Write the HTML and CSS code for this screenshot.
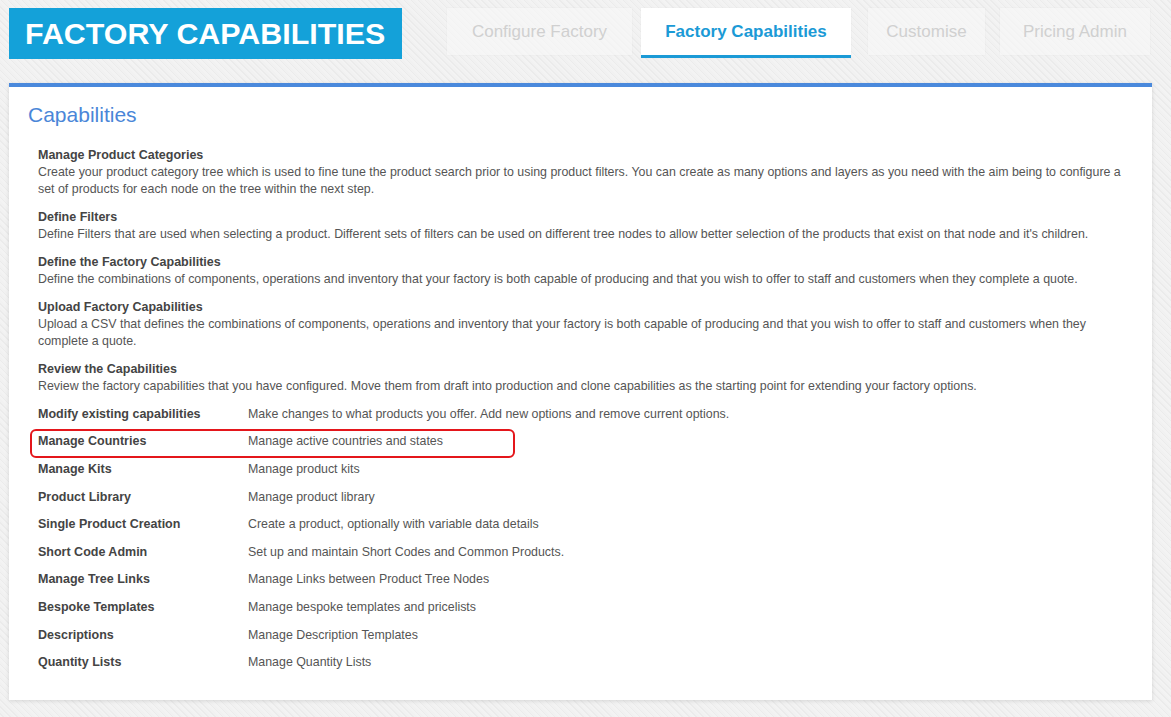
FILE: index.html
```html
<!DOCTYPE html>
<html lang="en">
<head>
  <meta charset="UTF-8">
  <title>Factory Capabilities</title>
  <link rel="stylesheet" href="styles.css">
</head>
<body>
  <div class="page">
    <header class="top-bar">
      <div class="brand">FACTORY CAPABILITIES</div>
      <nav class="tabs">
        <a class="tab tab-configure">Configure Factory</a>
        <a class="tab tab-capabilities active">Factory Capabilities</a>
        <a class="tab tab-customise">Customise</a>
        <a class="tab tab-pricing">Pricing Admin</a>
      </nav>
    </header>

    <section class="panel">
      <h2 class="panel-title">Capabilities</h2>

      <!-- steps with long descriptions -->
      <div class="cap-list">
        <div class="cap-block">
          <h3>Manage Product Categories</h3>
          <p>Create your product category tree which is used to fine tune the product search prior to using product filters. You can create as many options and layers as you need with the aim being to configure a set of products for each node on the tree within the next step.</p>
        </div>
        <div class="cap-block">
          <h3>Define Filters</h3>
          <p>Define Filters that are used when selecting a product. Different sets of filters can be used on different tree nodes to allow better selection of the products that exist on that node and it's children.</p>
        </div>
        <div class="cap-block">
          <h3>Define the Factory Capabilities</h3>
          <p>Define the combinations of components, operations and inventory that your factory is both capable of producing and that you wish to offer to staff and customers when they complete a quote.</p>
        </div>
        <div class="cap-block">
          <h3>Upload Factory Capabilities</h3>
          <p>Upload a CSV that defines the combinations of components, operations and inventory that your factory is both capable of producing and that you wish to offer to staff and customers when they complete a quote.</p>
        </div>
        <div class="cap-block">
          <h3>Review the Capabilities</h3>
          <p>Review the factory capabilities that you have configured. Move them from draft into production and clone capabilities as the starting point for extending your factory options.</p>
        </div>
      </div>

      <!-- short admin links -->
      <div class="cap-table">
        <div class="cap-row"><span class="cap-name">Modify existing capabilities</span><span class="cap-desc">Make changes to what products you offer. Add new options and remove current options.</span></div>
        <div class="cap-row highlight"><span class="cap-name">Manage Countries</span><span class="cap-desc">Manage active countries and states</span></div>
        <div class="cap-row"><span class="cap-name">Manage Kits</span><span class="cap-desc">Manage product kits</span></div>
        <div class="cap-row"><span class="cap-name">Product Library</span><span class="cap-desc">Manage product library</span></div>
        <div class="cap-row"><span class="cap-name">Single Product Creation</span><span class="cap-desc">Create a product, optionally with variable data details</span></div>
        <div class="cap-row"><span class="cap-name">Short Code Admin</span><span class="cap-desc">Set up and maintain Short Codes and Common Products.</span></div>
        <div class="cap-row"><span class="cap-name">Manage Tree Links</span><span class="cap-desc">Manage Links between Product Tree Nodes</span></div>
        <div class="cap-row"><span class="cap-name">Bespoke Templates</span><span class="cap-desc">Manage bespoke templates and pricelists</span></div>
        <div class="cap-row"><span class="cap-name">Descriptions</span><span class="cap-desc">Manage Description Templates</span></div>
        <div class="cap-row"><span class="cap-name">Quantity Lists</span><span class="cap-desc">Manage Quantity Lists</span></div>
      </div>
    </section>
  </div>
</body>
</html>
```

FILE: styles.css
```css
* {
  margin: 0;
  padding: 0;
  box-sizing: border-box;
}

html, body {
  height: 100%;
  font-family: "Liberation Sans", Arial, sans-serif;
  background-color: #efefef;
  background-image: repeating-linear-gradient(45deg, #f3f3f3 0 2px, #ebebeb 2px 3px, #f1f1f1 3px 5px);
}

.page {
  padding: 8px 19px 0 9px;
}

/* header: brand block + tabs */
.top-bar {
  display: flex;
  align-items: flex-start;
  height: 75px;
}

.brand {
  width: 393px;
  height: 51px;
  background-color: #14a1d9;
  color: #fff;
  font-size: 30.4px;
  font-weight: bold;
  padding-left: 16px;
  line-height: 51px;
  white-space: nowrap;
}

.tabs {
  display: flex;
  margin-left: 45px;
}

.tab {
  display: flex;
  align-items: center;
  justify-content: center;
  height: 47px;
  color: #d0d0d0;
  font-size: 17px;
  background-color: rgba(248, 248, 248, 0.6);
  box-shadow: 0 0 2px rgba(0, 0, 0, 0.04);
  white-space: nowrap;
}

.tab-configure { width: 185px; }
.tab-capabilities { width: 210px; margin-left: 9px; }
.tab-customise { width: 117px; margin-left: 17px; }
.tab-pricing { width: 150px; margin-left: 15px; }

.tab.active {
  height: 50px;
  background-color: #fff;
  color: #1b9ad6;
  font-size: 17px;
  font-weight: bold;
  border-bottom: 3px solid #1b9ad6;
}

/* main white panel */
.panel {
  background-color: #fff;
  border-top: 4px solid #4a89dc;
  box-shadow: 0 1px 4px rgba(0, 0, 0, 0.12);
  height: 617px;
  padding: 16px 24px 0 19px;
}

.panel-title {
  font-size: 21px;
  font-weight: normal;
  color: #4a86d8;
  line-height: 24px;
  margin-bottom: 20px;
}

.cap-list {
  padding-left: 10px;
}

.cap-block {
  margin-bottom: 11px;
}

.cap-block:last-child {
  margin-bottom: 5px;
}

.cap-block h3 {
  font-size: 12.5px;
  font-weight: bold;
  color: #444;
  line-height: 17px;
}

.cap-block p {
  font-size: 12.4px;
  color: #555;
  line-height: 17px;
}

.cap-table {
  padding-left: 10px;
}

.cap-row {
  display: grid;
  grid-template-columns: 210px 1fr;
  align-items: center;
  height: 27.6px;
  position: relative;
}

.cap-name {
  font-size: 12.5px;
  font-weight: bold;
  color: #444;
}

.cap-desc {
  font-size: 12.4px;
  color: #555;
}

/* red annotation round one row */
.cap-row.highlight::after {
  content: '';
  box-sizing: border-box;
  position: absolute;
  left: -8px;
  top: 1px;
  width: 485px;
  height: 29px;
  border: 2px solid #e4161b;
  border-radius: 6px;
}
```
